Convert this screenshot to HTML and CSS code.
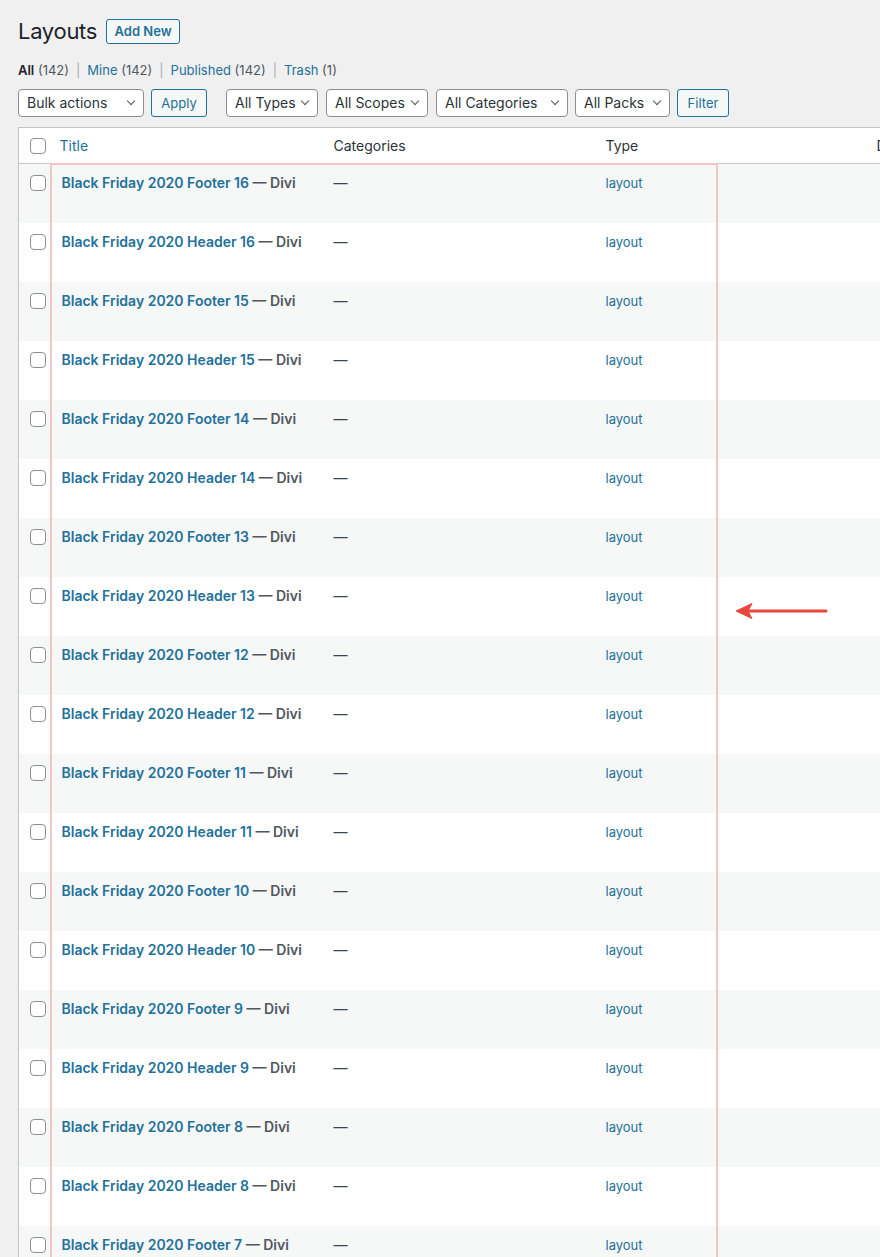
FILE: index.html
```html
<!DOCTYPE html>
<html lang="en">
<head>
<meta charset="utf-8">
<title>Layouts</title>
<link rel="stylesheet" href="styles.css">
</head>
<body>
<div class="page">
  <div class="head">
    <h1 class="title">Layouts</h1>
    <a class="btn add-new" href="#">Add New</a>
  </div>
  <ul class="views">
    <li><b class="current">All</b> <span class="count">(142)</span></li>
    <li class="sep">|</li>
    <li><a href="#">Mine</a> <span class="count">(142)</span></li>
    <li class="sep">|</li>
    <li><a href="#">Published</a> <span class="count">(142)</span></li>
    <li class="sep">|</li>
    <li><a href="#">Trash</a> <span class="count">(1)</span></li>
  </ul>
  <div class="filters">
    <div class="select w-bulk">Bulk actions<span class="chev"></span></div>
    <a class="btn small apply" href="#">Apply</a>
    <div class="select w-types">All Types<span class="chev"></span></div>
    <div class="select w-scopes">All Scopes<span class="chev"></span></div>
    <div class="select w-cats">All Categories<span class="chev"></span></div>
    <div class="select w-packs">All Packs<span class="chev"></span></div>
    <a class="btn small filter" href="#">Filter</a>
  </div>
  <div class="table-wrap">
    <table class="list">
      <colgroup>
        <col class="c-cb"><col class="c-title"><col class="c-cat"><col class="c-type"><col class="c-date">
      </colgroup>
      <thead>
        <tr>
          <th class="cb"><span class="checkbox"></span></th>
          <th class="th-title"><a href="#">Title</a></th>
          <th>Categories</th>
          <th>Type</th>
          <th>Date</th>
        </tr>
      </thead>
      <tbody id="rows"></tbody>
    </table>
  </div>
  <div class="highlight"></div>
  <svg class="arrow" width="100" height="24" viewBox="0 0 100 24">
    <line x1="14" y1="12" x2="93" y2="12" stroke="#e8473d" stroke-width="3.2" stroke-linecap="round"/>
    <path d="M3 12 L19 4.5 L15 12 L19 19.5 Z" fill="#e8473d" stroke="#e8473d" stroke-width="1" stroke-linejoin="round"/>
  </svg>
</div>
<script>
  var names = [
    ["Footer", 16], ["Header", 16], ["Footer", 15], ["Header", 15],
    ["Footer", 14], ["Header", 14], ["Footer", 13], ["Header", 13],
    ["Footer", 12], ["Header", 12], ["Footer", 11], ["Header", 11],
    ["Footer", 10], ["Header", 10], ["Footer", 9], ["Header", 9],
    ["Footer", 8], ["Header", 8], ["Footer", 7], ["Header", 7]
  ];
  var html = "";
  names.forEach(function (n) {
    html += '<tr>' +
      '<td class="cb"><span class="checkbox"></span></td>' +
      '<td class="td-title"><a href="#">Black Friday 2020 ' + n[0] + ' ' + n[1] + '</a> — Divi</td>' +
      '<td class="td-cat">—</td>' +
      '<td><a class="type" href="#">layout</a></td>' +
      '<td></td>' +
      '</tr>';
  });
  document.getElementById("rows").innerHTML = html;
</script>
</body>
</html>
```

FILE: styles.css
```css
html, body {
  margin: 0;
  padding: 0;
  background: #f0f0f1;
  overflow: hidden;
}

body {
  font-family: Inter, "Noto Sans", "Liberation Sans", sans-serif;
  color: #3c434a;
  font-size: 14px;
}

a {
  color: #22719a;
  text-decoration: none;
}

.page {
  position: relative;
  padding: 18px 0 0 18px;
}

.head {
  display: flex;
  align-items: center;
  gap: 9px;
  height: 26px;
}

.title {
  margin: 0;
  font-size: 22px;
  font-weight: 400;
  color: #1d2327;
  line-height: 26px;
  letter-spacing: -0.3px;
}

.btn {
  display: inline-flex;
  align-items: center;
  justify-content: center;
  box-sizing: border-box;
  border: 1px solid #22719a;
  border-radius: 3px;
  background: #f6f7f7;
  color: #22719a;
  font-size: 13px;
}

.add-new {
  height: 25px;
  width: 74px;
  padding: 0;
  font-weight: 600;
}

.views {
  list-style: none;
  margin: 0;
  padding: 0;
  margin-top: 16px;
  display: flex;
  gap: 7px;
  font-size: 13px;
  line-height: 20px;
}

.views .current {
  color: #1d2327;
  font-weight: 600;
}

.views .count {
  color: #50575e;
}

.views .sep {
  color: #a7aaad;
}

.filters {
  display: flex;
  align-items: center;
  gap: 7px;
  margin-top: 9px;
  height: 28px;
}

.select {
  position: relative;
  box-sizing: border-box;
  height: 28px;
  border: 1px solid #8c8f94;
  border-radius: 4px;
  background: #fff;
  color: #2c3338;
  font-size: 14px;
  line-height: 26px;
  padding-left: 8px;
}

.chev {
  position: absolute;
  right: 9px;
  top: 8px;
  width: 5px;
  height: 5px;
  border-right: 1.3px solid #50575e;
  border-bottom: 1.3px solid #50575e;
  transform: rotate(45deg);
}

.w-bulk { width: 126px; }
.w-types { width: 92px; margin-left: 12px; }
.w-scopes { width: 102px; margin-left: 1px; }
.w-cats { width: 132px; margin-left: 1px; }
.w-packs { width: 95px; }

.small {
  height: 28px;
  padding: 0;
  font-size: 13px;
}

.apply {
  width: 56px;
}

.filter {
  width: 52px;
}

.table-wrap {
  margin-top: 10px;
  overflow: hidden;
}

.list {
  width: 1300px;
  table-layout: fixed;
  border-collapse: collapse;
  border: 1px solid #c3c4c7;
  background: #fff;
}

.c-cb { width: 33px; }
.c-title { width: 272px; }
.c-cat { width: 272px; }
.c-type { width: 271px; }

.list th {
  text-align: left;
  font-weight: 400;
  color: #2c3338;
  padding: 7px 10px;
  height: 21px;
  line-height: 21px;
  border-bottom: 1px solid #c3c4c7;
  font-size: 14px;
}

.list th.th-title {
  padding-left: 8px;
}

.list th.cb,
.list td.cb {
  padding: 11px 0 0 11px;
  vertical-align: top;
}

.list th.cb {
  padding-top: 10px;
  padding-bottom: 0;
}

.checkbox {
  display: block;
  box-sizing: border-box;
  width: 16px;
  height: 16px;
  border: 1px solid #8c8f94;
  border-radius: 4px;
  background: #fff;
}

.list tbody tr {
  height: 59px;
}

.list tbody tr:nth-child(odd) {
  background: #f6f7f7;
}

.list td {
  vertical-align: top;
  padding: 8px 10px 0;
  line-height: 21px;
}

.td-title {
  font-weight: 600;
  font-size: 14px;
  color: #50575e;
  white-space: nowrap;
}

.td-title a {
  font-weight: 600;
}

.td-cat {
  color: #3c434a;
}

.type {
  font-size: 13px;
}

.highlight {
  position: absolute;
  left: 50px;
  top: 163px;
  width: 668px;
  height: 1200px;
  box-sizing: border-box;
  border: 2px solid #f4c5c5;
  pointer-events: none;
}

.arrow {
  position: absolute;
  left: 733px;
  top: 599px;
}
```
